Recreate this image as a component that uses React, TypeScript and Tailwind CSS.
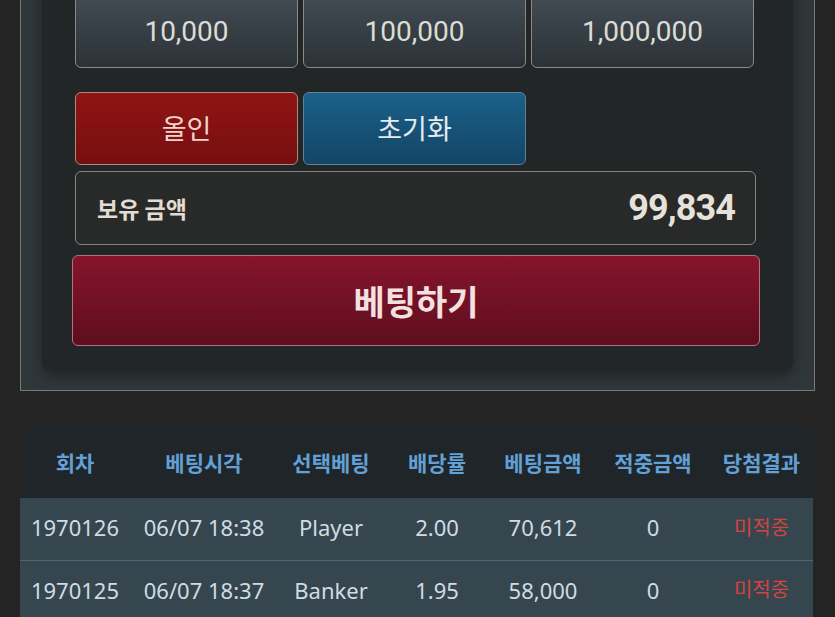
import React from "react";

const amounts = ["10,000", "100,000", "1,000,000"];

const headers = ["회차", "베팅시각", "선택베팅", "배당률", "베팅금액", "적중금액", "당첨결과"];

const rows = [
  { round: "1970126", time: "06/07 18:38", pick: "Player", odds: "2.00", bet: "70,612", win: "0", result: "미적중" },
  { round: "1970125", time: "06/07 18:37", pick: "Banker", odds: "1.95", bet: "58,000", win: "0", result: "미적중" },
];

const korean = { fontFamily: '"Noto Sans CJK KR", "Noto Sans", sans-serif' };
const roboto = { fontFamily: 'Roboto, "Noto Sans CJK KR", sans-serif' };
const tableBody = { fontFamily: '"Noto Sans", "Noto Sans CJK KR", sans-serif' };

const cols = "grid grid-cols-[110px_148px_106px_106px_106px_114px_103px]";

const App = () => {
  return (
    <div className="min-h-screen bg-[#242424] px-[20px] overflow-hidden" style={korean}>
      {/* betting panel */}
      <div className="-mt-[40px] border border-[#7b7a74] bg-[#30373a] px-[21px] pt-[20px] pb-[20px]">
        <div className="rounded-lg bg-[#222627] pl-[33px] pr-[32px] pt-[14px] pb-[24px] shadow-[0_6px_14px_rgba(0,0,0,0.35)]">
          <div className="grid grid-cols-[223px_223px_223px] gap-[5px] w-[679px]">
            {amounts.map((a) => (
              <button
                key={a}
                className="h-[73px] rounded-md border border-[#8c8a82] bg-gradient-to-b from-[#434c54] to-[#2b3237] text-[28px] text-[#dcdcd4]"
                style={roboto}
              >
                {a}
              </button>
            ))}
          </div>

          <div className="mt-[24px] grid grid-cols-[223px_223px] gap-[5px]">
            <button className="h-[73px] rounded-md border border-[#a98a80] bg-gradient-to-b from-[#911414] to-[#760f0f] text-[27px] text-[#f3d3cc]">
              올인
            </button>
            <button className="h-[73px] rounded-md border border-[#5d8298] bg-gradient-to-b from-[#1b6189] to-[#134566] text-[27px] text-[#e3ebf0]">
              초기화
            </button>
          </div>

          <div className="mt-[6px] flex h-[74px] w-[681px] items-center justify-between rounded-md border border-[#87857d] bg-[#282929] pl-[21px] pr-[20px]">
            <span className="text-[23px] font-bold text-[#e2ddd0]">보유 금액</span>
            <span className="text-[36px] font-bold tracking-tight text-[#e6e2da]" style={roboto}>
              99,834
            </span>
          </div>

          <button className="mt-[10px] -ml-[3px] h-[91px] w-[688px] rounded-md border border-[#b07282] bg-gradient-to-b from-[#88142b] to-[#5d0e1e] text-[34px] font-bold text-[#f5e0e0]">
            베팅하기
          </button>
        </div>
      </div>

      {/* history table */}
      <div className="mt-[36px] w-[793px]">
        <div className={`${cols} h-[71px] items-center bg-[#1f2529] text-[21px] font-bold text-[#62a0d6]`}>
          {headers.map((h) => (
            <div key={h} className="text-center">
              {h}
            </div>
          ))}
        </div>
        {rows.map((r, i) => (
          <div
            key={r.round}
            className={`${cols} h-[62px] items-center bg-[#36464f] pb-[3px] text-[22px] text-[#d0dce4] ${i > 0 ? "border-t border-[#4e6675]" : ""}`}
            style={tableBody}
          >
            <div className="text-center">{r.round}</div>
            <div className="text-center">{r.time}</div>
            <div className="text-center">{r.pick}</div>
            <div className="text-center">{r.odds}</div>
            <div className="text-center">{r.bet}</div>
            <div className="text-center">{r.win}</div>
            <div className="text-center text-[20px] text-[#d24442]">{r.result}</div>
          </div>
        ))}
      </div>
    </div>
  );
};

export default App;
